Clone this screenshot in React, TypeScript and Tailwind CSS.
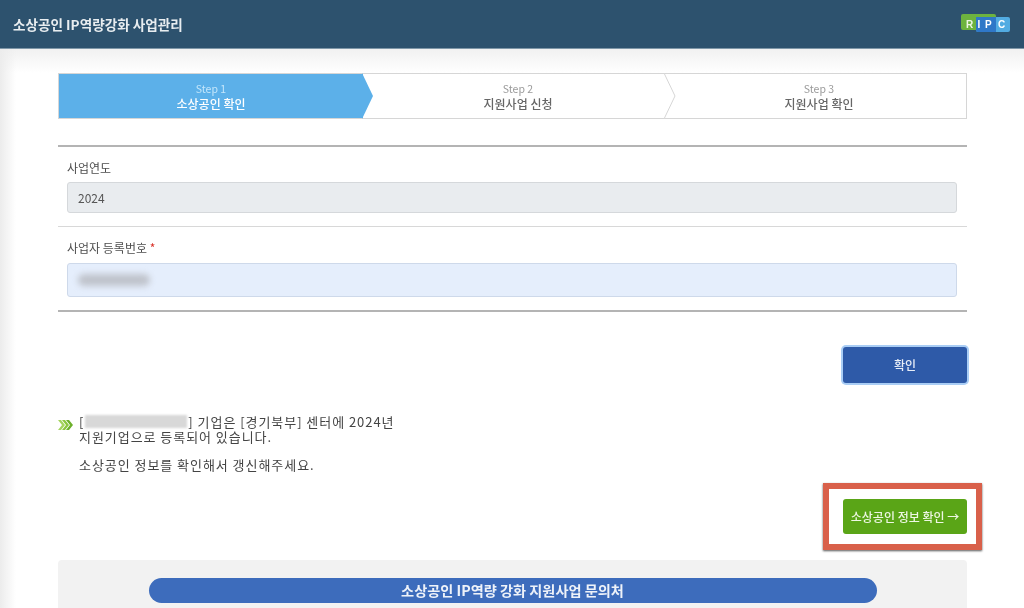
const font = "font-['Noto_Sans_CJK_KR','Noto_Sans',sans-serif]";

const steps = [
  { no: "Step 1", title: "소상공인 확인" },
  { no: "Step 2", title: "지원사업 신청" },
  { no: "Step 3", title: "지원사업 확인" },
];

function Stepper() {
  return (
    <div className="relative flex h-[46px] border border-[#d6d6d6] bg-white">
      <div className="flex w-[304px] flex-col items-center justify-center bg-[#5cb0e9] leading-[15px] text-white">
        <span className="text-[10.5px] text-[#c4e6fb]">{steps[0].no}</span>
        <span className="text-[12px] font-medium">{steps[0].title}</span>
      </div>
      <div className="flex w-[302px] flex-col items-center justify-center pl-[8px] leading-[15px]">
        <span className="text-[10.5px] text-[#9a9a9a]">{steps[1].no}</span>
        <span className="text-[12px] font-medium text-[#666]">{steps[1].title}</span>
      </div>
      <div className="flex flex-1 flex-col items-center justify-center pl-[7px] leading-[15px]">
        <span className="text-[10.5px] text-[#9a9a9a]">{steps[2].no}</span>
        <span className="text-[12px] font-medium text-[#666]">{steps[2].title}</span>
      </div>
      {/* 단계 화살표 */}
      <svg className="absolute left-[303px] top-[-1px]" width="12" height="46" viewBox="0 0 12 46" aria-hidden>
        <path d="M0 0L11 23L0 46Z" fill="#5cb0e9" />
      </svg>
      <svg className="absolute left-[605px] top-[-1px]" width="12" height="46" viewBox="0 0 12 46" aria-hidden>
        <path d="M0 0L11 23L0 46" fill="#fff" stroke="#d6d6d6" />
      </svg>
    </div>
  );
}

export default function App() {
  return (
    <div className={`${font} relative h-[608px] w-[1024px] overflow-hidden bg-white blur-[0.6px]`}>
      <header className="flex h-[49px] items-center justify-between border-b border-[#7f97a8] bg-[#2d526e] pl-[13px] pr-[13px]">
        <h1 className="text-[13.6px] font-semibold text-[#e8edf0]">소상공인 IP역량강화 사업관리</h1>
        <svg className="mt-[-2px]" width="50" height="18" viewBox="0 0 50 18" aria-label="RIPC">
          <rect x="0" y="0" width="35" height="16" rx="2" fill="#6db33f" />
          <rect x="15" y="3" width="34" height="15" rx="2" fill="#52ace2" />
          <path d="M15 3h20v15H17a2 2 0 0 1-2-2Z" fill="#2f78c8" />
          <text x="5" y="14" fontSize="10" fontWeight="700" fill="#eef6e6" fontFamily="Liberation Sans">R</text>
          <text x="16.5" y="14" fontSize="10" fontWeight="700" fill="#fff" fontFamily="Liberation Sans">I</text>
          <text x="24" y="14" fontSize="10" fontWeight="700" fill="#fff" fontFamily="Liberation Sans">P</text>
          <text x="37" y="14" fontSize="10" fontWeight="700" fill="#fff" fontFamily="Liberation Sans">C</text>
        </svg>
      </header>

      <main className="bg-gradient-to-b from-[#f1f1f1] to-white to-[24px] pl-[58px] pr-[57px] pt-[24px]">
        <Stepper />

        <section className="mt-[26px] border-y-2 border-[#b4b4b4] text-[12px] text-[#4d4d4d]">
          <div className="border-b border-[#d8d8d8] px-[9px] pb-[13px] pt-[12px]">
            <label className="block h-[23px] leading-[17px]">사업연도</label>
            <div className="flex h-[31px] w-[890px] items-center rounded-[3px] border border-[#d5d8db] bg-[#e9ecef] px-[10px] text-[#555]">
              2024
            </div>
          </div>
          <div className="px-[9px] pb-[13px] pt-[12px]">
            <label className="block h-[24px] leading-[17px]">
              사업자 등록번호 <span className="text-[#d9342b]">*</span>
            </label>
            <div className="flex h-[34px] w-[890px] items-center rounded-[3px] border border-[#ced9ea] bg-[#e5eefc] px-[10px]">
              <div className="h-[12px] w-[72px] rounded-full bg-[#bfc3cb] blur-[3px]" />
            </div>
          </div>
        </section>

        <div className="mt-[35px] flex justify-end">
          <button className="h-[36px] w-[124px] rounded-[3px] bg-[#2e5aa8] text-[12px] font-medium text-[#e8eef8] ring-2 ring-[#a9cdf5]">
            확인
          </button>
        </div>

        <div className="mt-[31px] flex items-start">
          <svg className="mt-[6px]" width="15" height="10" viewBox="0 0 15 10" aria-hidden>
            <path d="M0 0h3l4 5-4 5H0l4-5Z" fill="#a4d45e" />
            <path d="M4 0h3l4 5-4 5H4l4-5Z" fill="#8cc63f" />
            <path d="M8 0h3l4 5-4 5H8l4-5Z" fill="#6db02c" />
          </svg>
          <div className="ml-[6px] text-[13px] leading-[15px] tracking-[0.95px] text-[#444]">
            <p className="flex items-center whitespace-pre">
              [<span className="mx-[1px] h-[13px] w-[102px] bg-[#d8d8d8] blur-[1px]" />] 기업은 [경기북부] 센터에 2024년
            </p>
            <p>지원기업으로 등록되어 있습니다.</p>
            <p className="mt-[13px]">소상공인 정보를 확인해서 갱신해주세요.</p>
          </div>
        </div>

        <div className="mt-[27px] flex justify-end">
          <button className="h-[35px] w-[124px] rounded-[3px] bg-[#5aa517] text-[12px] font-medium text-[#eef7e4]">
            소상공인 정보 확인 →
          </button>
        </div>

        <div className="mt-[26px] h-[60px] rounded-t-[4px] bg-[#f2f2f2] pt-[18px]">
          <div className="mx-auto flex h-[25px] w-[728px] items-center justify-center rounded-full bg-[#3d6cbc] text-[14.2px] font-bold text-[#eef2f9]">
            소상공인 IP역량 강화 지원사업 문의처
          </div>
        </div>
      </main>

      {/* 왼쪽 그림자 */}
      <div className="pointer-events-none absolute bottom-0 left-0 top-[49px] w-[16px] bg-gradient-to-r from-[#ececec] to-transparent" />
      {/* 강조 표시 */}
      <div className="absolute left-[823px] top-[483px] h-[67px] w-[159px] border-[6px] border-[#d9604a] shadow-[0_1px_2px_#555]" />
    </div>
  );
}
